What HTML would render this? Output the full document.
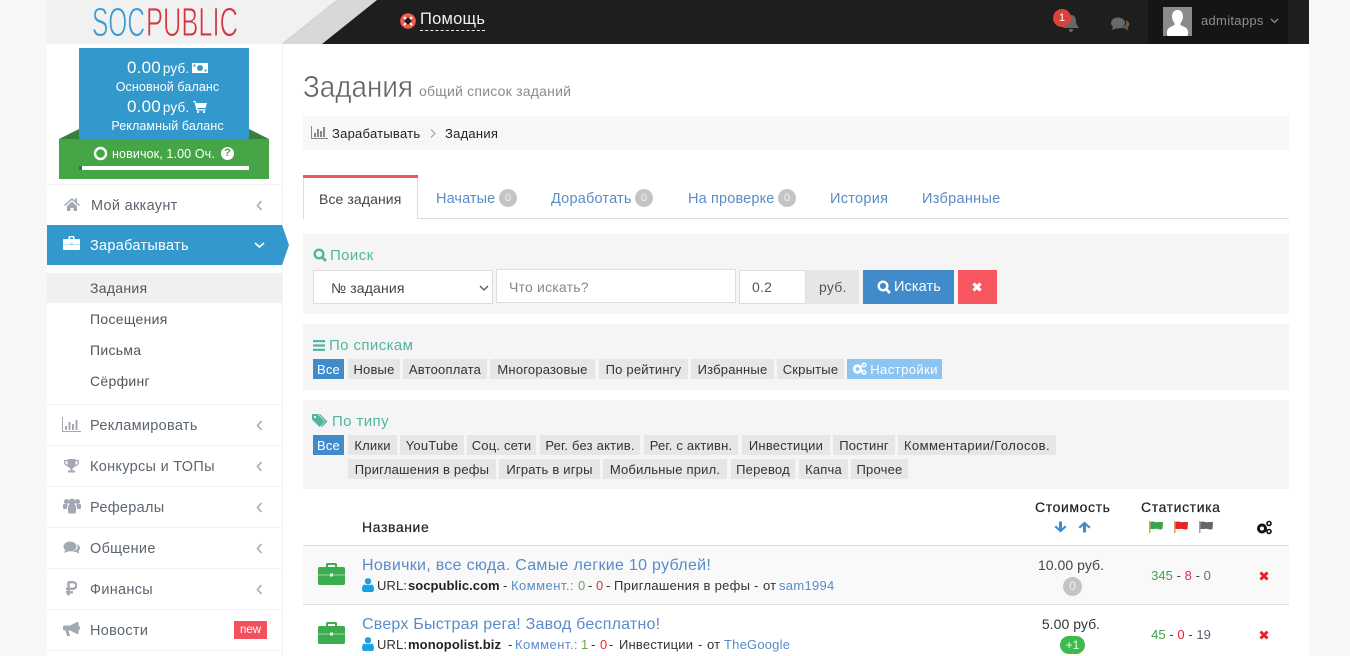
<!DOCTYPE html>
<html lang="ru"><head><meta charset="utf-8"><title>Задания</title>
<style>
html,body{margin:0;padding:0}
body{width:1350px;height:656px;overflow:hidden;background:#f7f7f7;font-family:"Liberation Sans",sans-serif;font-size:14px;color:#333;position:relative}
.a,.t,.tag,svg.i{position:absolute}
.t{white-space:nowrap;line-height:20px;height:20px;letter-spacing:.25px}
.c{text-align:center}
.tag{height:20px;line-height:21px;text-align:center;background:#e6e6e6;color:#333;font-size:13px;white-space:nowrap;letter-spacing:.2px;top:0}
.blue{background:#428bca;color:#fff}
.m{color:#5c6670;font-size:14.5px;left:91px;letter-spacing:.3px}
.s{color:#555;font-size:14px;left:90px;letter-spacing:.3px}
.line{position:absolute;left:47px;width:235px;height:1px;background:#eef3f5}
.tab{color:#5a8bc9;font-size:14.5px;top:189px;letter-spacing:.2px}
.b0{position:absolute;top:189px;width:18px;height:18px;border-radius:9px;background:#c4c4c4;color:#f1f1f1;font-size:11px;line-height:18px;text-align:center}
.panel{position:absolute;left:303px;width:986px;background:#f5f5f5}
.ttl{color:#52b5a0;font-size:15px;letter-spacing:.4px}
a{color:#5a8bc9;text-decoration:none}
.sub{font-size:13px;color:#333;letter-spacing:.13px;top:0}
.hd{color:#222;font-size:14px;letter-spacing:.6px;-webkit-text-stroke:.2px #222}
</style></head><body>

<div class="a" style="left:47px;top:0;width:1262px;height:656px;background:#fff"></div>
<div class="a" style="left:282px;top:44px;width:1px;height:612px;background:#eef3f5"></div>

<!-- header -->
<svg class="i" style="left:47px;top:0" width="1262" height="44" viewBox="0 0 1262 44">
<rect width="1262" height="44" fill="#1e1e1e"/>
<polygon points="0,0 290,0 235,44 0,44" fill="#f1f1f1"/>
<polygon points="290,0 330,0 275,44 235,44" fill="#d8d8d8"/>
<rect x="1101" width="140" height="44" fill="#151515"/>
<text x="45" y="36" font-size="41" fill="#3b9ad2" stroke="#f1f1f1" stroke-width=".9" textLength="53" lengthAdjust="spacingAndGlyphs">SOC</text>
<text x="99" y="36" font-size="41" fill="#d2363f" stroke="#f1f1f1" stroke-width=".9" textLength="92" lengthAdjust="spacingAndGlyphs">PUBLIC</text>
</svg>

<svg class="i" style="left:400px;top:13px" width="16" height="16" viewBox="0 0 16 16"><circle cx="8" cy="8" r="5.6" fill="none" stroke="#f05a50" stroke-width="4.4"/><path d="M4 4l2 2M12 4l-2 2M4 12l2-2M12 12l-2-2" stroke="#fff" stroke-width="2"/></svg>
<div class="t" style="left:420px;top:9px;color:#f0f0f0;font-size:16.5px;letter-spacing:.25px;height:21px;border-bottom:1px dashed #eee">Помощь</div>

<svg class="i" style="left:1061px;top:14px" width="20" height="19" viewBox="0 0 20 19"><path d="M10 1c3.500 0 5 3 5 6 0 4 2 5 3 7H2c1-2 3-3 3-7 0-3 1.500-6 5-6zM8 15h4c0 2-1 3-2 3s-2-1-2-3z" fill="#686868"/></svg>
<div class="a" style="left:1053px;top:9px;width:18px;height:18px;border-radius:9px;background:#d9423a;color:#fff;font-size:11px;line-height:18px;text-align:center">1</div>
<svg class="i" style="left:1110px;top:16px" width="20" height="17" viewBox="0 0 20 17"><ellipse cx="8" cy="7" rx="7" ry="5.500" fill="#68696b"/><path d="M3 10l-1 4 5-2z" fill="#68696b"/><path d="M15.500 4c2.500 1 4 2.500 3.800 4.500-.2 1.500-1 2.500-1.800 3l1 3-4-2.300c-1.500 0-3-.2-4-.7 4 0 7-3 5-7.500z" fill="#6a5a48"/></svg>
<svg class="i" style="left:1163px;top:7px" width="29" height="29" viewBox="0 0 29 29"><rect width="29" height="29" fill="#8a8a8a"/><path d="M14.500 3c3.600 0 5.500 2.800 5.500 6.500 0 2.800-1.200 5-2.500 6.500v2c2 1.500 7 2 7.500 6.500.2 2-.5 4.500-.5 4.500H4.500S3.800 26.500 4 24.500C4.500 20 9.500 19.500 11.500 18v-2C10.200 14.500 9 12.300 9 9.500 9 5.800 10.900 3 14.500 3z" fill="#fff"/></svg>
<div class="t" style="left:1201px;top:11px;color:#8d8d8d;font-size:13px;letter-spacing:.3px">admitapps</div>
<svg class="i" style="left:1270px;top:18px" width="9" height="6" viewBox="0 0 9 6"><path d="M1 1l3.500 3.500L8 1" fill="none" stroke="#8d8d8d" stroke-width="1.300"/></svg>

<!-- balance -->
<svg class="i" style="left:59px;top:129px" width="210" height="50" viewBox="0 0 210 50"><polygon points="0,10 20,0 20,10" fill="#38803a"/><polygon points="210,10 190,0 190,10" fill="#38803a"/><rect y="10" width="210" height="40" fill="#46a546"/></svg>
<div class="a" style="left:79px;top:48px;width:170px;height:91px;background:#3398cc"></div>
<div class="t" style="left:127px;top:58px;color:#fff;font-size:17px;letter-spacing:.2px;word-spacing:-3px">0.00 <span style="font-size:13.500px">руб.</span></div>
<svg class="i" style="left:192px;top:63px" width="16" height="10" viewBox="0 0 16 10"><rect width="16" height="10" fill="#fff"/><circle cx="8" cy="5" r="3" fill="#3398cc"/><rect x="1.500" y="1.500" width="2" height="2" fill="#3398cc"/><rect x="12.500" y="6.500" width="2" height="2" fill="#3398cc"/></svg>
<div class="t c" style="left:79px;width:177px;top:77px;color:#fff;font-size:12.500px;letter-spacing:.1px">Основной баланс</div>
<div class="t" style="left:127px;top:97px;color:#fff;font-size:17px;letter-spacing:.2px;word-spacing:-3px">0.00 <span style="font-size:13.500px">руб.</span></div>
<svg class="i" style="left:193px;top:101px" width="14" height="12" viewBox="0 0 14 12"><path d="M0 0h2.500l.5 2h11l-1.500 5H4.500l.3 1.300H12.500V9.500H3.500L1.500 1H0z" fill="#fff"/><circle cx="5" cy="11" r="1.100" fill="#fff"/><circle cx="11" cy="11" r="1.100" fill="#fff"/></svg>
<div class="t c" style="left:79px;width:177px;top:116px;color:#fff;font-size:12.500px;letter-spacing:.1px">Рекламный баланс</div>
<svg class="i" style="left:93px;top:146px" width="15" height="15" viewBox="0 0 15 15"><circle cx="7.500" cy="7.500" r="5.500" fill="none" stroke="#fff" stroke-width="2.400"/></svg>
<div class="t" style="left:112px;top:144px;color:#fff;font-size:12.500px;letter-spacing:.12px">новичок, 1.00 Оч.</div>
<div class="a" style="left:221px;top:147px;width:13px;height:13px;border-radius:7px;background:#fff;color:#46a546;font-size:11px;font-weight:bold;line-height:13px;text-align:center">?</div>
<div class="a" style="left:79px;top:166px;width:170px;height:4px;background:#fff"></div>
<div class="a" style="left:79px;top:166px;width:3px;height:4px;background:#2a7a2e"></div>

<!-- sidebar -->
<div class="line" style="top:184px"></div>
<svg class="i" style="left:64px;top:197px" width="16" height="14" viewBox="0 0 16 14"><path d="M8 1L0 8l1 1 7-6 7 6 1-1-3-2.600V1.500h-2v2.100zM3 9l5-4.500L13 9v5H9.500v-3h-3v3H3z" fill="#a3a9b3"/></svg>
<div class="t m" style="top:196px">Мой аккаунт</div>
<svg class="i" style="left:256px;top:200px" width="7" height="11" viewBox="0 0 7 11"><path d="M5.500 1L1.500 5.500l4 4.500" fill="none" stroke="#a3a9b3" stroke-width="1.500"/></svg>

<svg class="i" style="left:47px;top:225px" width="242" height="40" viewBox="0 0 242 40"><polygon points="0,0 235,0 242,20 235,40 0,40" fill="#3398cc"/></svg>
<svg class="i" style="left:63px;top:236px" width="17" height="14" viewBox="0 0 17 14"><path d="M5.500 3V1.200C5.500.5 6 0 6.700 0h3.600c.7 0 1.200.5 1.200 1.200V3H16c.6 0 1 .4 1 1v9c0 .6-.4 1-1 1H1c-.6 0-1-.4-1-1V4c0-.6.400-1 1-1zM7 3h3V1.400H7z" fill="#fff"/><path d="M0 8.300h17" stroke="#a8d4ec" stroke-width=".7"/><rect x="7" y="7.300" width="3" height="2" fill="#a8d4ec"/></svg>
<div class="t m" style="top:236px;left:90px;color:#fff">Зарабатывать</div>
<svg class="i" style="left:254px;top:242px" width="11" height="7" viewBox="0 0 11 7"><path d="M1 1l4.500 4L10 1" fill="none" stroke="#fff" stroke-width="1.700"/></svg>

<div class="a" style="left:47px;top:273px;width:235px;height:30px;background:#f0f0f0"></div>
<div class="t s" style="top:278px">Задания</div>
<div class="t s" style="top:309px">Посещения</div>
<div class="t s" style="top:340px">Письма</div>
<div class="t s" style="top:371px">Сёрфинг</div>

<div class="line" style="top:404px"></div>
<div class="line" style="top:445px"></div>
<div class="line" style="top:486px"></div>
<div class="line" style="top:527px"></div>
<div class="line" style="top:568px"></div>
<div class="line" style="top:609px"></div>
<div class="line" style="top:650px"></div>

<svg class="i" style="left:62px;top:417px" width="19" height="15" viewBox="0 0 19 15"><path d="M.5 0v14.500H19" fill="none" stroke="#a3a9b3"/><path d="M3 9h2v4H3zM6.500 5h2v8h-2zM10 7h2v6h-2zM13.500 3h2v10h-2z" fill="#a3a9b3"/></svg>
<div class="t m" style="top:416px;left:90px">Рекламировать</div>
<svg class="i" style="left:64px;top:459px" width="15" height="15" viewBox="0 0 15 15"><path d="M3.500 0h8v1H15v2.500c0 2-2 3.500-4 4-.5.700-1.500 1.500-2.500 1.800V11.500H11V13.500H4V11.500H6.500V9.300C5.500 9 4.500 8.200 4 7.500c-2-.5-4-2-4-4V1h3.500zM1.300 2.300v1.200c0 1 1 1.800 2.400 2.400-.1-1-.2-2.300-.2-3.600zM13.700 2.300h-2.200c0 1.300-.1 2.600-.2 3.600 1.400-.6 2.400-1.400 2.400-2.400z" fill="#a3a9b3"/></svg>
<div class="t m" style="top:457px;left:90px">Конкурсы и ТОПы</div>
<svg class="i" style="left:63px;top:498px" width="18" height="16" viewBox="0 0 18 16"><circle cx="3.500" cy="3.500" r="2.500" fill="#a3a9b3"/><circle cx="14.500" cy="3.500" r="2.500" fill="#a3a9b3"/><circle cx="9" cy="4" r="3.500" fill="#a3a9b3"/><path d="M0 7c0-1 1-1.500 2-1h2.500L4 11H1c-1 0-1-1-1-4zM18 7c0-1-1-1.500-2-1h-2.500l.5 5h3c1 0 1-1 1-4zM5 9c0-1.500 1-2.500 2-2.500h4c1 0 2 1 2 2.500v5c0 1-.5 1.500-1.500 1.500h-5C5.500 15.500 5 15 5 14z" fill="#a3a9b3"/></svg>
<div class="t m" style="top:498px;left:90px">Рефералы</div>
<svg class="i" style="left:63px;top:541px" width="17" height="14" viewBox="0 0 17 14"><ellipse cx="7" cy="5.500" rx="6.500" ry="5" fill="#a3a9b3"/><path d="M2.500 8.500L1 12l5-2z" fill="#a3a9b3"/><path d="M14 3c2 1 3 2.500 3 4 0 1.500-.8 2.500-1.500 3l1 3-3.500-2c-1.500 0-3-.3-4-1 4 0 7-2.500 5-7z" fill="#a3a9b3"/></svg>
<div class="t m" style="top:539px;left:90px">Общение</div>
<svg class="i" style="left:65px;top:581px" width="12" height="15" viewBox="0 0 12 15"><path d="M3 1.200h5a3.300 3.300 0 0 1 0 6.600H1M1 11.300h7M3.500 1v13.500" fill="none" stroke="#a3a9b3" stroke-width="2.400"/></svg>
<div class="t m" style="top:580px;left:90px">Финансы</div>
<svg class="i" style="left:63px;top:622px" width="17" height="15" viewBox="0 0 17 15"><path d="M0 5c0-1 .7-1.500 1.500-1.500H7L14 0h1.500v12H14L7 8.500H5.500L7 14H4L2.500 8.500h-1C.7 8.500 0 8 0 7z" fill="#a3a9b3"/><path d="M15.500 3.500c1 .5 1.500 1.500 1.500 2.500s-.5 2-1.500 2.500z" fill="#a3a9b3"/></svg>
<div class="t m" style="top:621px;left:90px">Новости</div>
<div class="a" style="left:234px;top:621px;width:33px;height:18px;background:#f4515c;color:#fff;font-size:11.500px;line-height:19px;text-align:center">new</div>
<svg class="i" style="left:256px;top:420px" width="7" height="11" viewBox="0 0 7 11"><path d="M5.500 1L1.500 5.500l4 4.500" fill="none" stroke="#a3a9b3" stroke-width="1.500"/></svg>
<svg class="i" style="left:256px;top:461px" width="7" height="11" viewBox="0 0 7 11"><path d="M5.500 1L1.500 5.500l4 4.500" fill="none" stroke="#a3a9b3" stroke-width="1.500"/></svg>
<svg class="i" style="left:256px;top:502px" width="7" height="11" viewBox="0 0 7 11"><path d="M5.500 1L1.500 5.500l4 4.500" fill="none" stroke="#a3a9b3" stroke-width="1.500"/></svg>
<svg class="i" style="left:256px;top:543px" width="7" height="11" viewBox="0 0 7 11"><path d="M5.500 1L1.500 5.500l4 4.500" fill="none" stroke="#a3a9b3" stroke-width="1.500"/></svg>
<svg class="i" style="left:256px;top:584px" width="7" height="11" viewBox="0 0 7 11"><path d="M5.500 1L1.500 5.500l4 4.500" fill="none" stroke="#a3a9b3" stroke-width="1.500"/></svg>

<!-- title -->
<svg class="i" style="left:303px;top:67px" width="114" height="40" viewBox="0 0 114 40"><text x="0" y="30" font-size="30.500" fill="#666" stroke="#fff" stroke-width=".45" textLength="110" lengthAdjust="spacingAndGlyphs">Задания</text></svg>
<div class="t" style="left:419px;top:81px;color:#8b8b8b;font-size:14px;letter-spacing:.22px">общий список заданий</div>

<div class="a" style="left:303px;top:116px;width:986px;height:34px;background:#f7f7f7"></div>
<svg class="i" style="left:311px;top:126px" width="17" height="13" viewBox="0 0 17 13"><path d="M.5 0v12.500H17" fill="none" stroke="#888"/><path d="M3 7h2v4H3zM6 3h2v8H6zM9 5h2v6H9zM12 1h2v10h-2z" fill="#888"/></svg>
<div class="t" style="left:332px;top:124px;color:#222;font-size:13px;letter-spacing:.25px">Зарабатывать</div>
<svg class="i" style="left:430px;top:129px" width="6" height="9" viewBox="0 0 6 9"><path d="M1 .5l4 4-4 4" fill="none" stroke="#999"/></svg>
<div class="t" style="left:445px;top:124px;color:#222;font-size:13px;letter-spacing:.25px">Задания</div>

<!-- tabs -->
<div class="a" style="left:303px;top:218px;width:986px;height:1px;background:#ddd"></div>
<div class="a" style="left:303px;top:175px;width:113px;height:44px;background:#fff;border-left:1px solid #ddd;border-right:1px solid #ddd"></div>
<div class="a" style="left:303px;top:175px;width:115px;height:3px;background:#f0565d"></div>
<div class="t" style="left:319px;top:189px;color:#444;font-size:14px;letter-spacing:.1px">Все задания</div>
<div class="t tab" style="left:436px;letter-spacing:.1px">Начатые</div><div class="b0" style="left:499px">0</div>
<div class="t tab" style="left:551px">Доработать</div><div class="b0" style="left:635px">0</div>
<div class="t tab" style="left:688px;letter-spacing:.15px">На проверке</div><div class="b0" style="left:778px">0</div>
<div class="t tab" style="left:830px;letter-spacing:.3px">История</div>
<div class="t tab" style="left:922px;letter-spacing:.3px">Избранные</div>

<!-- search -->
<div class="panel" style="top:234px;height:80px"></div>
<svg class="i" style="left:313px;top:248px" width="14" height="14" viewBox="0 0 14 14"><circle cx="6" cy="6" r="4.300" fill="none" stroke="#52b5a0" stroke-width="2.400"/><path d="M9 9l4 4" stroke="#52b5a0" stroke-width="2.700"/></svg>
<div class="t ttl" style="left:330px;top:246px">Поиск</div>
<div class="a" style="left:313px;top:270px;width:178px;height:32px;background:#fff;border:1px solid #ddd"></div>
<div class="t" style="left:331px;top:278px;color:#444;font-size:14px;letter-spacing:.15px">№ задания</div>
<svg class="i" style="left:479px;top:285px" width="10" height="6" viewBox="0 0 10 6"><path d="M1 1l4 4 4-4" fill="none" stroke="#555" stroke-width="1.300"/></svg>
<div class="a" style="left:496px;top:269px;width:238px;height:32px;background:#fff;border:1px solid #ddd"></div>
<div class="t" style="left:509px;top:277px;color:#888;font-size:14px;letter-spacing:.2px">Что искать?</div>
<div class="a" style="left:739px;top:270px;width:65px;height:32px;background:#fff;border:1px solid #ddd"></div>
<div class="t" style="left:752px;top:277px;color:#555;font-size:14px">0.2</div>
<div class="a" style="left:806px;top:270px;width:53px;height:34px;background:#e6e6e6"></div>
<div class="t" style="left:819px;top:277px;color:#555;font-size:14px">руб.</div>
<div class="a" style="left:863px;top:270px;width:91px;height:34px;background:#428bca"></div>
<svg class="i" style="left:877px;top:280px" width="14" height="14" viewBox="0 0 14 14"><circle cx="6" cy="6" r="4.300" fill="none" stroke="#fff" stroke-width="2.400"/><path d="M9 9l4 4" stroke="#fff" stroke-width="2.700"/></svg>
<div class="t" style="left:894px;top:277px;color:#fff;font-size:14.500px;letter-spacing:.1px">Искать</div>
<div class="a" style="left:958px;top:270px;width:39px;height:34px;background:#f7565f"></div>
<svg class="i" style="left:972px;top:282px" width="10" height="10" viewBox="0 0 10 10"><path d="M1.500 1.500l7 7M8.500 1.500l-7 7" stroke="#fff" stroke-width="3.200"/></svg>

<!-- lists -->
<div class="panel" style="top:324px;height:66px"></div>
<svg class="i" style="left:313px;top:340px" width="12" height="11" viewBox="0 0 12 11"><path d="M0 0h12v2.200H0zM0 4.400h12v2.200H0zM0 8.800h12V11H0z" fill="#52b5a0"/></svg>
<div class="t ttl" style="left:329px;top:336px">По спискам</div>
<div class="a" style="left:0;top:359px">
<div class="tag blue" style="left:313px;width:31px">Все</div>
<div class="tag" style="left:348px;width:52px">Новые</div>
<div class="tag" style="left:403px;width:84px">Автооплата</div>
<div class="tag" style="left:490px;width:105px">Многоразовые</div>
<div class="tag" style="left:599px;width:89px">По рейтингу</div>
<div class="tag" style="left:691px;width:83px">Избранные</div>
<div class="tag" style="left:777px;width:67px">Скрытые</div>
<div class="tag" style="left:847px;width:95px;background:#8cc4f2;color:#fff;text-align:right;padding-right:4px;box-sizing:border-box;letter-spacing:.45px">Настройки</div>
</div>
<svg class="i" style="left:852px;top:362px" width="15" height="13" viewBox="0 0 15 13"><circle cx="5.500" cy="7" r="3.300" fill="none" stroke="#fff" stroke-width="2.800"/><circle cx="12" cy="3" r="1.800" fill="none" stroke="#fff" stroke-width="1.500"/><circle cx="12" cy="10.300" r="1.800" fill="none" stroke="#fff" stroke-width="1.500"/></svg>

<!-- types -->
<div class="panel" style="top:400px;height:89px"></div>
<svg class="i" style="left:312px;top:414px" width="16" height="14" viewBox="0 0 16 14"><path d="M0 0h5.500L13 7.500 7.500 13 0 5.500z" fill="#52b5a0"/><path d="M8 0l7.500 7.500L10 13l-1-1 4.500-4.500L6.500 0z" fill="#52b5a0"/><circle cx="3" cy="3" r="1.100" fill="#f5f5f5"/></svg>
<div class="t ttl" style="left:332px;top:412px">По типу</div>
<div class="a" style="left:0;top:435px">
<div class="tag blue" style="left:313px;width:31px">Все</div>
<div class="tag" style="left:348px;width:49px">Клики</div>
<div class="tag" style="left:400px;width:64px">YouTube</div>
<div class="tag" style="left:467px;width:69px">Соц. сети</div>
<div class="tag" style="left:540px;width:100px">Рег. без актив.</div>
<div class="tag" style="left:644px;width:94px">Рег. с активн.</div>
<div class="tag" style="left:742px;width:88px">Инвестиции</div>
<div class="tag" style="left:833px;width:62px">Постинг</div>
<div class="tag" style="left:898px;width:158px;letter-spacing:.4px">Комментарии/Голосов.</div>
</div>
<div class="a" style="left:0;top:459px">
<div class="tag" style="left:348px;width:148px">Приглашения в рефы</div>
<div class="tag" style="left:499px;width:101px">Играть в игры</div>
<div class="tag" style="left:603px;width:124px">Мобильные прил.</div>
<div class="tag" style="left:731px;width:64px">Перевод</div>
<div class="tag" style="left:799px;width:49px">Капча</div>
<div class="tag" style="left:851px;width:57px">Прочее</div>
</div>

<!-- table head -->
<div class="t hd" style="left:362px;top:517px">Название</div>
<div class="t hd" style="left:1035px;top:497px">Стоимость</div>
<div class="t hd" style="left:1141px;top:497px">Статистика</div>
<svg class="i" style="left:1054px;top:521px" width="13" height="12" viewBox="0 0 13 12"><path d="M6.500 11.500L.5 6l1.500-1.500 3 2.800V.5h3v6.800l3-2.800L12.500 6z" fill="#428bca"/></svg>
<svg class="i" style="left:1078px;top:521px" width="13" height="12" viewBox="0 0 13 12"><path d="M6.500.5L.5 6l1.500 1.500 3-2.800v6.800h3V4.700l3 2.800L12.500 6z" fill="#428bca"/></svg>
<svg class="i" style="left:1149px;top:521px" width="15" height="12" viewBox="0 0 15 12"><rect width="1.500" height="12" fill="#c9a86a"/><path d="M1.500 1c3-1.500 5 1 8 0h4.500l-.5 7c-3 1.500-5-1-8 0H1.500z" fill="#3aa54a"/></svg>
<svg class="i" style="left:1174px;top:521px" width="15" height="12" viewBox="0 0 15 12"><rect width="1.500" height="12" fill="#d8a070"/><path d="M1.500 1c3-1.500 5 1 8 0h4.500l-.5 7c-3 1.500-5-1-8 0H1.500z" fill="#ec2027"/></svg>
<svg class="i" style="left:1199px;top:521px" width="15" height="12" viewBox="0 0 15 12"><rect width="1.500" height="12" fill="#8aa8c0"/><path d="M1.500 1c3-1.500 5 1 8 0h4.500l-.5 7c-3 1.500-5-1-8 0H1.500z" fill="#666"/></svg>
<svg class="i" style="left:1256px;top:520px" width="16" height="15" viewBox="0 0 16 15"><circle cx="6" cy="8.500" r="3.500" fill="none" stroke="#111" stroke-width="3"/><circle cx="13" cy="3.500" r="2" fill="none" stroke="#111" stroke-width="1.600"/><circle cx="13" cy="11.500" r="2" fill="none" stroke="#111" stroke-width="1.600"/></svg>

<!-- rows -->
<div class="a" style="left:303px;top:545px;width:986px;height:1px;background:#ddd"></div>
<div class="a" style="left:303px;top:546px;width:986px;height:58px;background:#f9f9f9"></div>
<div class="a" style="left:303px;top:604px;width:986px;height:1px;background:#ddd"></div>

<svg class="i" style="left:318px;top:563px" width="27" height="22" viewBox="0 0 27 22"><path d="M8 4V1.500C8 .7 8.700 0 9.500 0h8C18.300 0 19 .7 19 1.500V4h6.500c.8 0 1.500.7 1.500 1.500v15c0 .8-.7 1.500-1.500 1.500h-24C.7 22 0 21.300 0 20.500v-15C0 4.700.7 4 1.500 4zM10 4h7V2h-7z" fill="#3cad4c"/><path d="M0 12h27" stroke="#bfe6c5" stroke-width=".8"/><rect x="12" y="10.500" width="3" height="3" fill="#e8f6ea"/></svg>
<div class="t" style="left:362px;top:556px;font-size:16px;letter-spacing:.3px"><a>Новички, все сюда. Самые легкие 10 рублей!</a></div>
<svg class="i" style="left:362px;top:578px" width="12" height="14" viewBox="0 0 12 14"><circle cx="6" cy="3.300" r="3.200" fill="#1ba1e2"/><path d="M2.500 6.500c1 .8 6 .8 7 0 1.500.3 2.500 2 2.500 5 0 1.500-1 2.500-2 2.500H2c-1 0-2-1-2-2.500 0-3 1-4.700 2.500-5z" fill="#1ba1e2"/></svg>
<div class="a" style="left:0;top:576px;height:20px">
<span class="t sub" style="left:377px">URL:</span>
<b class="t sub" style="left:408px;color:#222;letter-spacing:.05px">socpublic.com</b>
<span class="t sub" style="left:503px">-</span>
<a class="t sub" style="left:511px;color:#5a8bc9;letter-spacing:.46px">Коммент.:</a>
<span class="t sub" style="left:578px;color:#6aa84f">0</span>
<span class="t sub" style="left:588px">-</span>
<span class="t sub" style="left:596px;color:#e03030">0</span>
<span class="t sub" style="left:606px">-</span>
<span class="t sub" style="left:614px;letter-spacing:.3px">Приглашения в рефы</span>
<span class="t sub" style="left:754px">-</span>
<span class="t sub" style="left:763px">от</span>
<a class="t sub" style="left:779px;color:#5a8bc9;letter-spacing:.3px">sam1994</a>
</div>
<div class="t c" style="left:1021px;width:100px;top:555px;color:#444;font-size:14px;letter-spacing:.05px">10.00 руб.</div>
<div class="a" style="left:1063px;top:577px;width:19px;height:19px;border-radius:10px;background:#c4c4c4;color:#f1f1f1;font-size:12px;line-height:19px;text-align:center">0</div>
<div class="t c" style="left:1131px;width:100px;top:566px;font-size:13px;letter-spacing:.05px;color:#444"><span style="color:#3fa34d">345</span> - <span style="color:#d9304f">8</span> - <span style="color:#5c6f82">0</span></div>
<svg class="i" style="left:1259px;top:571px" width="10" height="10" viewBox="0 0 10 10"><path d="M1.500 1.500l7 7M8.500 1.500l-7 7" stroke="#e8202a" stroke-width="3"/></svg>

<svg class="i" style="left:318px;top:622px" width="27" height="22" viewBox="0 0 27 22"><path d="M8 4V1.500C8 .7 8.700 0 9.500 0h8C18.300 0 19 .7 19 1.500V4h6.500c.8 0 1.500.7 1.500 1.500v15c0 .8-.7 1.500-1.500 1.500h-24C.7 22 0 21.300 0 20.500v-15C0 4.700.7 4 1.500 4zM10 4h7V2h-7z" fill="#3cad4c"/><path d="M0 12h27" stroke="#bfe6c5" stroke-width=".8"/><rect x="12" y="10.500" width="3" height="3" fill="#e8f6ea"/></svg>
<div class="t" style="left:362px;top:615px;font-size:16px;letter-spacing:.22px"><a>Сверх Быстрая рега! Завод бесплатно!</a></div>
<svg class="i" style="left:362px;top:637px" width="12" height="14" viewBox="0 0 12 14"><circle cx="6" cy="3.300" r="3.200" fill="#1ba1e2"/><path d="M2.500 6.500c1 .8 6 .8 7 0 1.500.3 2.500 2 2.500 5 0 1.500-1 2.500-2 2.500H2c-1 0-2-1-2-2.500 0-3 1-4.700 2.500-5z" fill="#1ba1e2"/></svg>
<div class="a" style="left:0;top:635px;height:20px">
<span class="t sub" style="left:377px">URL:</span>
<b class="t sub" style="left:408px;color:#222;letter-spacing:.1px">monopolist.biz</b>
<span class="t sub" style="left:508px">-</span>
<a class="t sub" style="left:515px;color:#5a8bc9;letter-spacing:.46px">Коммент.:</a>
<span class="t sub" style="left:581px;color:#6aa84f">1</span>
<span class="t sub" style="left:591px">-</span>
<span class="t sub" style="left:600px;color:#e03030">0</span>
<span class="t sub" style="left:609px">-</span>
<span class="t sub" style="left:619px;letter-spacing:.2px">Инвестиции</span>
<span class="t sub" style="left:698px">-</span>
<span class="t sub" style="left:707px">от</span>
<a class="t sub" style="left:724px;color:#5a8bc9;letter-spacing:.2px">TheGoogle</a>
</div>
<div class="t c" style="left:1021px;width:100px;top:614px;color:#333;font-size:14px;letter-spacing:.05px">5.00 руб.</div>
<div class="a" style="left:1060px;top:636px;width:25px;height:18px;border-radius:9px;background:#3dbb4e;color:#e8ffe8;font-size:12px;line-height:18px;text-align:center">+1</div>
<div class="t c" style="left:1131px;width:100px;top:625px;font-size:13px;letter-spacing:.05px;color:#444"><span style="color:#3fa34d">45</span> - <span style="color:#e8202a">0</span> - <span style="color:#5c5f70">19</span></div>
<svg class="i" style="left:1259px;top:630px" width="10" height="10" viewBox="0 0 10 10"><path d="M1.500 1.500l7 7M8.500 1.500l-7 7" stroke="#e8202a" stroke-width="3"/></svg>

</body></html>
